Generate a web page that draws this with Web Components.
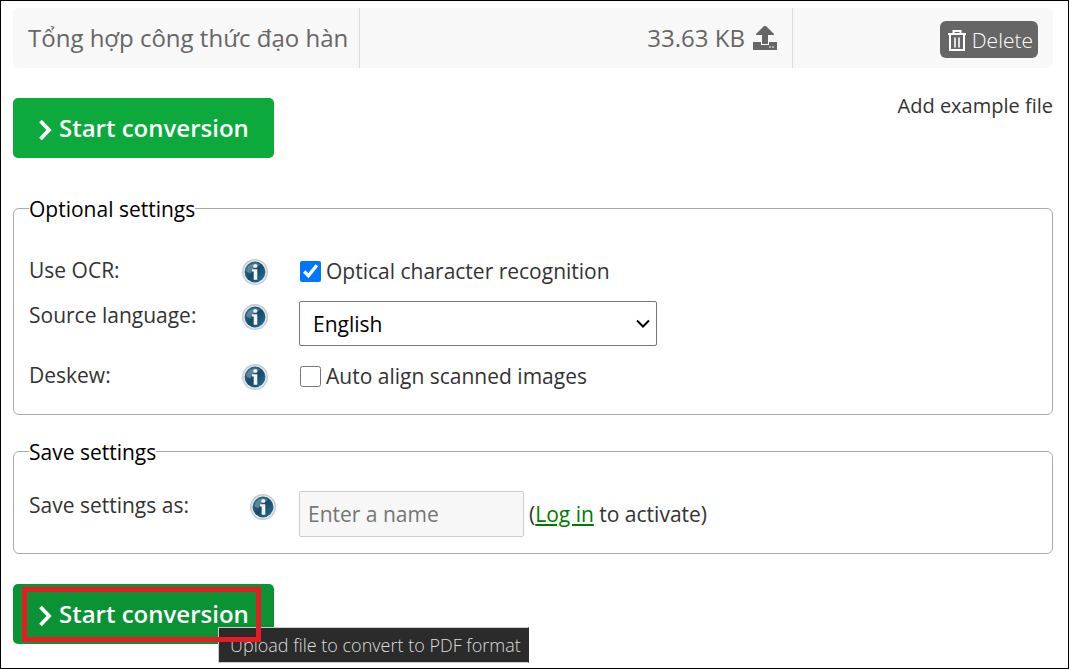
<!DOCTYPE html>
<html lang="en">
<head>
<meta charset="utf-8">
<title>Convert to PDF</title>
<style>
  body {
    margin: 0;
    background: #fff;
    color: #333;
    font-family: "Open Sans", "Noto Sans", sans-serif;
    font-size: 21px;
    line-height: 30px;
  }
</style>
</head>
<body>
<conversion-page></conversion-page>

<script>
/* Defines an element whose shadow root is filled from an html string */
function define(name, html) {
  const template = document.createElement("template");
  template.innerHTML = html;

  customElements.define(
    name,
    class extends HTMLElement {
      constructor() {
        super().attachShadow({ mode: "open" });
        this.shadowRoot.append(template.content.cloneNode(true));
      }
    }
  );
}

define("info-badge", /*html*/ `
  <svg viewBox="0 0 26 26" width="26" height="26" role="img" aria-label="Info">
    <defs>
      <linearGradient id="ring" x1="0" y1="0" x2="0" y2="1">
        <stop offset="0" stop-color="#c4c9cd"/>
        <stop offset="1" stop-color="#c3d0da"/>
      </linearGradient>
      <linearGradient id="disc" x1="0" y1="0" x2="1" y2="1">
        <stop offset="0" stop-color="#3d7896"/>
        <stop offset="0.5" stop-color="#164a68"/>
        <stop offset="1" stop-color="#2a7298"/>
      </linearGradient>
    </defs>
    <circle cx="13" cy="13" r="13" fill="url(#ring)"/>
    <circle cx="13" cy="13" r="11.6" fill="#e3e9ed"/>
    <circle cx="13" cy="13" r="10.4" fill="url(#disc)"/>
    <path d="M4.4 12.5a8.8 8.8 0 0 1 14-6.4C14 7 10 10 8.6 14.5z" fill="#fff" opacity="0.25"/>
    <rect x="11.3" y="5.2" width="4" height="3.6" rx="1.5" fill="#f2f6f8"/>
    <path d="M10 10.2h5.3v10.6h-3.6v-8.4H10z" fill="#f2f6f8"/>
  </svg>
  <style>
    :host {
      display: block;
      flex: none;
      width: 26px;
      height: 26px;
      margin-top: 3px;
    }
    svg {
      display: block;
    }
  </style>
`);

define("start-button", /*html*/ `
  <button type="submit">
    <svg viewBox="0 0 14 22" width="14" height="22" aria-hidden="true">
      <path d="M2.5 2L11 11L2.5 20" fill="none" stroke="#fff" stroke-width="3.8"/>
    </svg>
    <slot></slot>
  </button>
  <style>
    :host {
      display: block;
      --start-color: #0caa3d;
    }
    button {
      display: flex;
      align-items: center;
      gap: 7px;
      height: 60px;
      padding: 0 25px;
      border: 0;
      border-radius: 5px;
      background: var(--start-color);
      color: #fff;
      font: 600 24px/30px "Open Sans", "Noto Sans", sans-serif;
      cursor: pointer;
    }
    button svg {
      margin-top: 3px;
    }
  </style>
`);

define("file-table", /*html*/ `
  <table>
    <tr>
      <td class="name"><slot name="name"></slot></td>
      <td class="size">
        <div>
          <slot name="size"></slot>
          <svg viewBox="0 0 24 24" width="24" height="24" aria-hidden="true">
            <path d="M11 0h2l8 8v1h-6v9H9V9H3V8z" fill="#666"/>
            <path d="M0 16h8v3h8v-3h8v8H0z" fill="#666"/>
            <path d="M16 20.5h2v1h-2zM19 20.5h2v1h-2z" fill="#f8f8f8"/>
          </svg>
        </div>
      </td>
      <td class="action">
        <button type="button">
          <svg viewBox="0 0 18 22" width="18" height="22" aria-hidden="true" fill="none" stroke="#fff">
            <path d="M0 4h18M5.5 3.5V1h7v2.5" stroke-width="2"/>
            <path d="M2 4.5V20h14V4.5" stroke-width="2"/>
            <path d="M7 7.5v10M11 7.5v10" stroke-width="1.6"/>
          </svg>
          Delete
        </button>
      </td>
    </tr>
  </table>
  <style>
    :host {
      display: block;
      color: #666;
      font-size: 24px;
    }
    table {
      width: 100%;
      table-layout: fixed;
      border-spacing: 0;
      border-radius: 6px;
      background: #f8f8f8;
    }
    td {
      box-sizing: border-box;
      height: 60px;
      padding: 0 15px;
      text-align: right;
      white-space: nowrap;
    }
    td + td {
      border-left: 1px solid #ddd;
    }
    .name {
      width: 33.3%;
      text-align: left;
    }
    .action {
      width: 25.1%;
    }
    td div {
      display: flex;
      justify-content: flex-end;
      align-items: center;
      gap: 8px;
    }
    button {
      display: flex;
      align-items: center;
      gap: 6px;
      height: 37px;
      margin: 3px 0 0 auto;
      padding: 0 5px 0 8px;
      border: 0;
      border-radius: 6px;
      background: #666;
      color: #fff;
      font: 300 21px/30px "Open Sans", "Noto Sans", sans-serif;
    }
    button svg {
      margin-top: 3px;
    }
  </style>
`);

define("settings-group", /*html*/ `
  <fieldset>
    <legend><slot name="legend"></slot></legend>
    <slot></slot>
  </fieldset>
  <style>
    :host {
      display: block;
    }
    fieldset {
      display: flex;
      flex-direction: column;
      gap: 15px;
      min-width: 0;
      margin: 0;
      padding: var(--group-padding, 32px 15px 23px);
      border: 1px solid #aaa;
      border-radius: 6px;
    }
    legend {
      padding: 2px 0 0;
      color: #000;
    }
  </style>
`);

define("setting-row", /*html*/ `
  <div class="label">
    <slot name="label"></slot>
    <info-badge></info-badge>
  </div>
  <div class="control"><slot></slot></div>
  <style>
    :host {
      display: grid;
      grid-template-columns: 270px 1fr;
    }
    .label {
      display: flex;
      justify-content: space-between;
      align-items: flex-start;
      padding-right: var(--badge-gap, 31px);
      line-height: 28px;
    }
    .control {
      display: flex;
      align-items: center;
      gap: 5px;
    }
  </style>
`);

define("select-frame", /*html*/ `
  <slot></slot>
  <svg viewBox="0 0 14 10" width="14" height="10" aria-hidden="true">
    <path d="M1 1.5L7 7.5L13 1.5" fill="none" stroke="#000" stroke-width="2"/>
  </svg>
  <style>
    :host {
      display: grid;
      flex: 0 1 358px;
      align-items: center;
    }
    ::slotted(select), svg {
      grid-area: 1 / 1;
    }
    svg {
      justify-self: end;
      margin-right: 7px;
      pointer-events: none;
    }
  </style>
`);

define("tool-tip", /*html*/ `
  <slot></slot>
  <style>
    :host {
      display: block;
      padding: 2px 7px 2px 11px;
      border: 1px solid #ccc;
      border-right-color: #2b2b2b;
      background: #2b2b2b;
      color: #ddd;
      font-size: 18px;
      font-weight: 300;
      white-space: nowrap;
    }
  </style>
`);

define("conversion-page", /*html*/ `
  <main>
    <file-table>
      <span slot="name">Tổng hợp công thức đạo hàn</span>
      <span slot="size">33.63 KB</span>
    </file-table>

    <div class="actions">
      <start-button>Start conversion</start-button>
      <a class="example" href="#example">Add example file</a>
    </div>

    <settings-group>
      <span slot="legend">Optional settings</span>
      <setting-row>
        <label slot="label" for="ocr">Use OCR:</label>
        <input type="checkbox" id="ocr" checked>
        <label for="ocr">Optical character recognition</label>
      </setting-row>
      <setting-row>
        <label slot="label" for="language">Source language:</label>
        <select-frame>
          <select id="language"><option>English</option></select>
        </select-frame>
      </setting-row>
      <setting-row>
        <label slot="label" for="deskew">Deskew:</label>
        <input type="checkbox" id="deskew">
        <label for="deskew">Auto align scanned images</label>
      </setting-row>
    </settings-group>

    <settings-group class="save">
      <span slot="legend">Save settings</span>
      <setting-row>
        <label slot="label" for="preset">Save settings as:</label>
        <input type="text" id="preset" placeholder="Enter a name">
        <span>(<a class="login" href="#login">Log in</a> to activate)</span>
      </setting-row>
    </settings-group>

    <div class="submit">
      <start-button class="hovered">Start conversion</start-button>
      <tool-tip role="tooltip">Upload file to convert to PDF format</tool-tip>
      <div class="marker"></div>
    </div>
  </main>
  <style>
    :host {
      display: block;
    }
    main {
      box-sizing: border-box;
      min-height: 100vh;
      margin-right: 1px;
      padding: 7px 15px 24px 12px;
      border: 1px solid #000;
    }
    .actions {
      display: flex;
      justify-content: space-between;
      align-items: flex-start;
      margin: 30px 0 34px;
    }
    .example {
      color: #333;
      font-size: 20px;
      line-height: 16px;
      text-decoration: none;
    }
    .save {
      --group-padding: 24px 15px 16px;
      --badge-gap: 23px;
      margin-top: 20px;
    }
    input[type="checkbox"] {
      width: 21px;
      height: 21px;
      margin: 0 0 0 1px;
    }
    select, input[type="text"] {
      box-sizing: border-box;
      font: inherit;
    }
    select {
      height: 45px;
      padding: 0 13px;
      border: 1px solid #767676;
      border-radius: 2px;
      appearance: none;
      background: #fff;
      color: #000;
    }
    input[type="text"] {
      width: 225px;
      height: 46px;
      padding: 0 8px;
      border: 1px solid #ccc;
      border-radius: 2px;
      background: #f7f7f7;
    }
    input::placeholder {
      color: #757575;
    }
    .login {
      color: #007a00;
    }
    .submit {
      position: relative;
      width: fit-content;
      margin-top: 30px;
    }
    .hovered {
      --start-color: #0b9234;
    }
    /* tooltip hangs off the button, the marker frames its caption */
    tool-tip {
      position: absolute;
      top: 43px;
      left: 205px;
    }
    .marker {
      position: absolute;
      inset: 3px 13px 2px 9px;
      border: 5px solid #e51c23;
      pointer-events: none;
    }
  </style>
`);
</script>
</body>
</html>
